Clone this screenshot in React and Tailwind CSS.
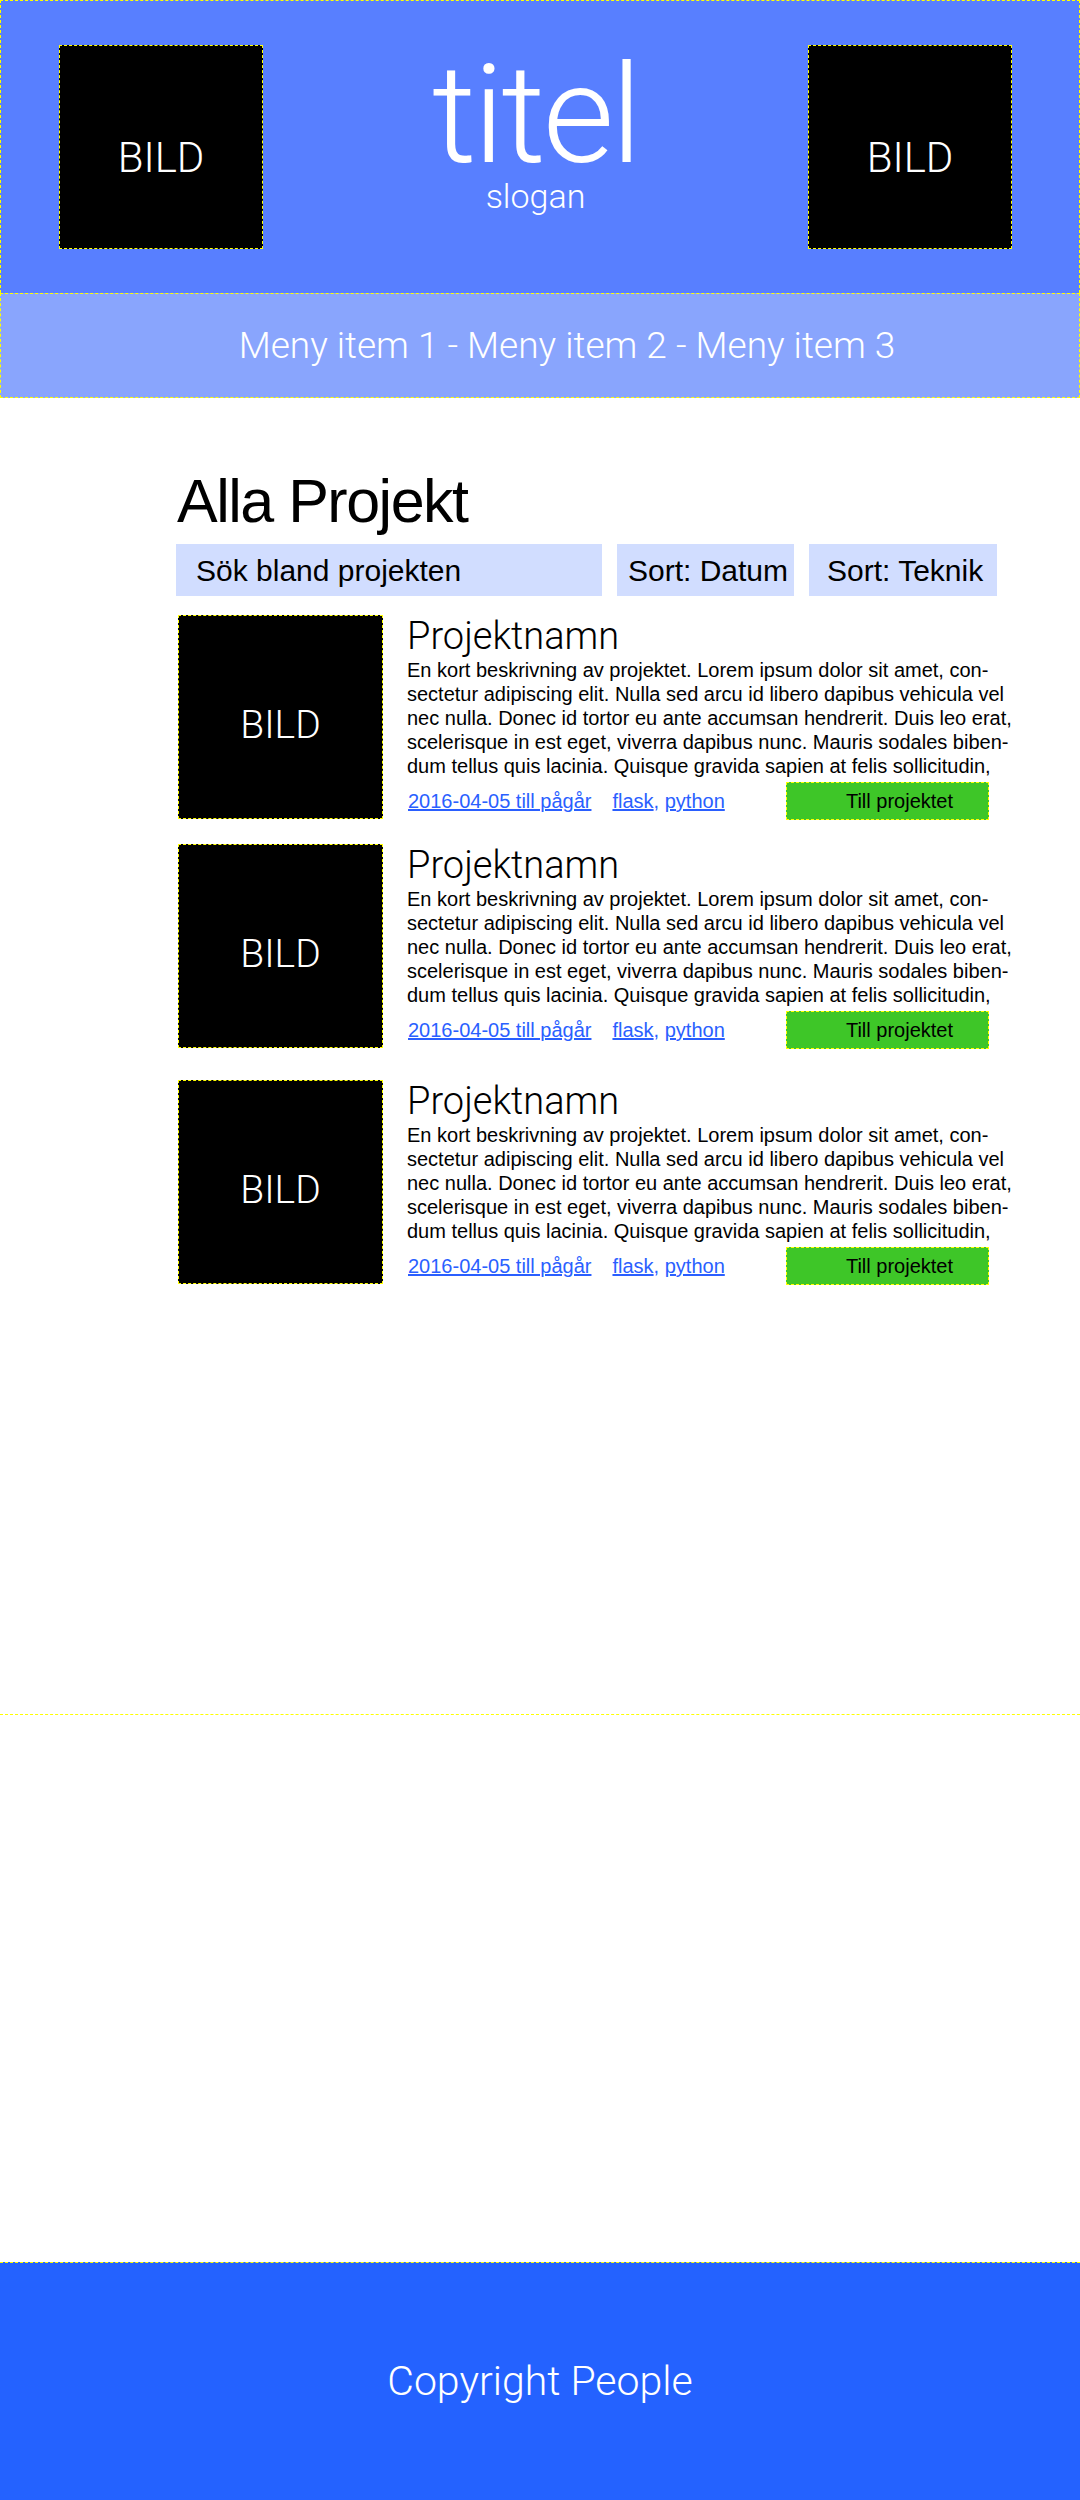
const PROJEKT = [
  { mt: 'mt-[19px]' },
  { mt: 'mt-[24px]' },
  { mt: 'mt-[31px]' },
];

const RADER = [
  'En kort beskrivning av projektet. Lorem ipsum dolor sit amet, con-',
  'sectetur adipiscing elit. Nulla sed arcu id libero dapibus vehicula vel',
  'nec nulla. Donec id tortor eu ante accumsan hendrerit. Duis leo erat,',
  'scelerisque in est eget, viverra dapibus nunc. Mauris sodales biben-',
  'dum tellus quis lacinia. Quisque gravida sapien at felis sollicitudin,',
];

const LIGHT = "font-['Roboto',sans-serif] font-light";

function Bild({ text = 'text-[40px] pt-[18px]' }) {
  return (
    <div className="w-full h-full bg-black border border-dashed border-[#ffff00] flex items-center justify-center">
      <span className={`${LIGHT} ${text} text-white`}>BILD</span>
    </div>
  );
}

export default function App() {
  return (
    <div className="w-[1080px] min-h-[2500px] bg-white font-['Liberation_Sans',Arial,sans-serif] flex flex-col">

      {/* header */}
      <header className="h-[293px] bg-[#587fff] border border-b-0 border-dashed border-[#ffff00] flex items-start pl-[58px] pr-[67px] pt-[44px]">
        <div className="w-[204px] h-[204px] shrink-0"><Bild text="text-[42px] pt-[20px]" /></div>
        <div className="flex-1 flex flex-col items-center text-white">
          <h1 className={`${LIGHT} text-[138px] leading-[120px] tracking-[-3px] mt-[10px]`}>titel</h1>
          <p className={`${LIGHT} text-[34px] leading-[36px] mt-[3px]`}>slogan</p>
        </div>
        <div className="w-[204px] h-[204px] shrink-0"><Bild text="text-[42px] pt-[20px]" /></div>
      </header>

      {/* meny */}
      <nav className="h-[105px] bg-[#89a5fd] border border-dashed border-[#ffff00] flex items-center justify-center pl-[54px]">
        <span className={`${LIGHT} text-[37px] text-white`}>Meny item 1 - Meny item 2 - Meny item 3</span>
      </nav>

      {/* innehåll */}
      <main className="h-[1317px] border-b border-dashed border-[#ffff00] pl-[176px] pt-[68px]">
        <div className="w-[821px]">
          <h2 className="text-[61px] leading-[70px] tracking-[-1.5px] text-black ml-[1px]">Alla Projekt</h2>

          <div className="flex gap-[15px] mt-[8px] h-[52px]">
            <div className="w-[426px] bg-[#d1ddff] flex items-center pl-[20px] text-[30px] text-black">Sök bland projekten</div>
            <div className="w-[177px] bg-[#d1ddff] flex items-center pl-[11px] text-[30px] text-black">Sort: Datum</div>
            <div className="w-[188px] bg-[#d1ddff] flex items-center pl-[18px] text-[30px] text-black">Sort: Teknik</div>
          </div>

          {PROJEKT.map((p, i) => (
            <div key={i} className={`flex ${p.mt}`}>
              <div className="w-[205px] h-[204px] shrink-0 ml-[2px]"><Bild text="text-[39px] pt-[16px]" /></div>
              <div className="ml-[24px] w-[590px] flex flex-col">
                <h3 className={`${LIGHT} text-[38px] leading-[42px] text-black`}>Projektnamn</h3>
                <p className="text-[20px] leading-[24px] text-black mt-[1px]">
                  {RADER.map((r) => (
                    <span key={r} className="block whitespace-nowrap">{r}</span>
                  ))}
                </p>
                <div className="flex items-center mt-[4px] text-[20px]">
                  <a href="#" className="text-[#2a5fff] underline ml-[1px]">2016-04-05 till pågår</a>
                  <span className="ml-[21px] text-[#2a5fff]">
                    <a href="#" className="underline">flask</a>, <a href="#" className="underline">python</a>
                  </span>
                  <a href="#" className="ml-auto mr-[8px] w-[203px] h-[38px] bg-[#3ec628] border border-dashed border-[#ffff00] flex items-center justify-center pl-[24px] text-black text-[20px]">
                    Till projektet
                  </a>
                </div>
              </div>
            </div>
          ))}
        </div>
      </main>

      <div className="flex-1" />

      {/* sidfot */}
      <footer className="h-[238px] bg-[#2462ff] border-t border-dashed border-[#ffff00] flex items-center justify-center">
        <span className={`${LIGHT} text-[41px] text-white`}>Copyright People</span>
      </footer>
    </div>
  );
}
